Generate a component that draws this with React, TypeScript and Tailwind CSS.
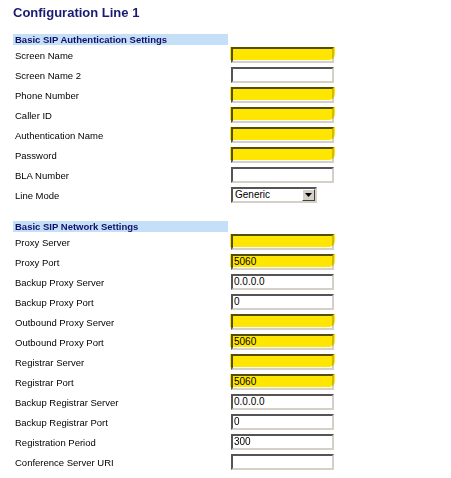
import React from "react";

type Row = { label: string; value?: string; hl?: boolean; select?: boolean };

const auth: Row[] = [
  { label: "Screen Name", hl: true },
  { label: "Screen Name 2" },
  { label: "Phone Number", hl: true },
  { label: "Caller ID", hl: true },
  { label: "Authentication Name", hl: true },
  { label: "Password", hl: true },
  { label: "BLA Number" },
  { label: "Line Mode", select: true },
];

const net: Row[] = [
  { label: "Proxy Server", hl: true },
  { label: "Proxy Port", value: "5060", hl: true },
  { label: "Backup Proxy Server", value: "0.0.0.0" },
  { label: "Backup Proxy Port", value: "0" },
  { label: "Outbound Proxy Server", hl: true },
  { label: "Outbound Proxy Port", value: "5060", hl: true },
  { label: "Registrar Server", hl: true },
  { label: "Registrar Port", value: "5060", hl: true },
  { label: "Backup Registrar Server", value: "0.0.0.0" },
  { label: "Backup Registrar Port", value: "0" },
  { label: "Registration Period", value: "300" },
  { label: "Conference Server URI" },
];

function Field({ row }: { row: Row }) {
  if (row.select) {
    return (
      <div className="relative ml-[1px] flex h-[16px] w-[86px] items-center border-2 border-t-[#555] border-l-[#555] border-b-[#d4d0c8] border-r-[#d4d0c8] bg-white">
        <span className="flex-1 pl-[2px] text-[10px] leading-none text-black">Generic</span>
        <div className="flex h-[12px] w-[13px] items-center justify-center border border-t-white border-l-white border-b-[#404040] border-r-[#404040] bg-[#d4d0c8]">
          <svg width="7" height="4" viewBox="0 0 7 4">
            <path d="M0 0h7L3.5 4z" fill="#000" />
          </svg>
        </div>
      </div>
    );
  }
  return (
    <div className="relative ml-[1px] h-[16px] w-[103px]">
      <div className="flex h-full w-full items-center border-2 border-t-[#555] border-l-[#555] border-b-[#d4d0c8] border-r-[#d4d0c8] bg-white pl-[1px] text-[10px] leading-none text-black">
        {row.value}
      </div>
      {row.hl && (
        <div className="pointer-events-none absolute left-[-1px] top-0 h-[13px] w-[105px] rounded-br-[6px] bg-[#ffe600] mix-blend-multiply" />
      )}
    </div>
  );
}

function Section({ title, rows }: { title: string; rows: Row[] }) {
  return (
    <div className="grid grid-cols-[217px_110px]">
      <div className="flex h-[11px] w-[215px] items-center bg-[#c5dff8] pl-[2px] text-[9.5px] font-bold leading-none text-[#10106a]">
        {title}
      </div>
      <div />
      {rows.map((r) => (
        <React.Fragment key={r.label}>
          <div className="flex h-[20px] items-center pl-[2px] pt-[1px] text-[9.5px] leading-none text-black">
            {r.label}
          </div>
          <div className="flex h-[20px] items-center">
            <Field row={r} />
          </div>
        </React.Fragment>
      ))}
    </div>
  );
}

export default function App() {
  return (
    <div
      className="h-[478px] w-[451px] overflow-hidden bg-white pl-[13px]"
      style={{ fontFamily: '"Liberation Sans", Arial, sans-serif' }}
    >
      <div className="pt-[4px] text-[13px] font-bold leading-[18px] text-[#1a1a72]">
        Configuration Line 1
      </div>
      <div className="mt-[12px]">
        <Section title="Basic SIP Authentication Settings" rows={auth} />
      </div>
      <div className="mt-[16px]">
        <Section title="Basic SIP Network Settings" rows={net} />
      </div>
    </div>
  );
}
